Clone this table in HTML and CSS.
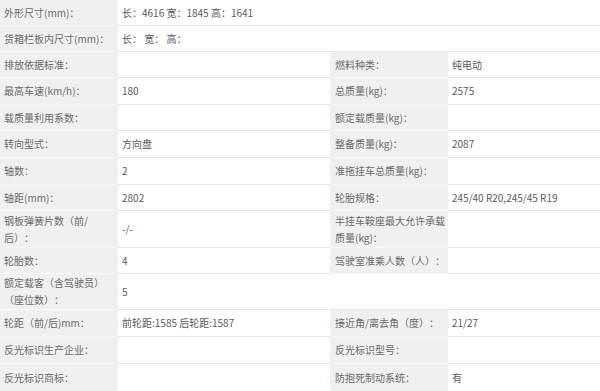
FILE: index.html
```html
<!DOCTYPE html>
<html lang="zh-CN">
<head>
<meta charset="utf-8">
<title>车辆参数</title>
<link rel="stylesheet" href="styles.css">
</head>
<body>
<table class="spec">
  <colgroup>
    <col class="c-label">
    <col class="c-value">
    <col class="c-label">
    <col class="c-value2">
  </colgroup>
  <tbody>
    <tr class="h25"><td class="lb">外形尺寸(mm)：</td><td class="val" colspan="3">长：4616 宽：1845 高：1641</td></tr>
    <tr class="h26"><td class="lb">货箱栏板内尺寸(mm)：</td><td class="val" colspan="3">长：&nbsp;宽：&nbsp;高：</td></tr>
    <tr class="h26"><td class="lb">排放依据标准：</td><td class="val"></td><td class="lb lb2">燃料种类：</td><td class="val">纯电动</td></tr>
    <tr class="h27"><td class="lb">最高车速(km/h)：</td><td class="val">180</td><td class="lb lb2">总质量(kg)：</td><td class="val">2575</td></tr>
    <tr class="h26"><td class="lb">载质量利用系数：</td><td class="val"></td><td class="lb lb2">额定载质量(kg)：</td><td class="val"></td></tr>
    <tr class="h27"><td class="lb">转向型式：</td><td class="val">方向盘</td><td class="lb lb2">整备质量(kg)：</td><td class="val">2087</td></tr>
    <tr class="h27"><td class="lb">轴数：</td><td class="val">2</td><td class="lb lb2">准拖挂车总质量(kg)：</td><td class="val"></td></tr>
    <tr class="h26"><td class="lb">轴距(mm)：</td><td class="val">2802</td><td class="lb lb2">轮胎规格：</td><td class="val">245/40 R20,245/45 R19</td></tr>
    <tr class="h37"><td class="lb">钢板弹簧片数（前/后）：</td><td class="val">-/-</td><td class="lb lb2">半挂车鞍座最大允许承载质量(kg)：</td><td class="val"></td></tr>
    <tr class="h26"><td class="lb">轮胎数：</td><td class="val">4</td><td class="lb lb2">驾驶室准乘人数（人）：</td><td class="val"></td></tr>
    <tr class="h36"><td class="lb">额定载客（含驾驶员）（座位数）：</td><td class="val" colspan="3">5</td></tr>
    <tr class="h27"><td class="lb">轮距（前/后)mm：</td><td class="val">前轮距:1585 后轮距:1587</td><td class="lb lb2">接近角/离去角（度）：</td><td class="val">21/27</td></tr>
    <tr class="h27"><td class="lb">反光标识生产企业：</td><td class="val"></td><td class="lb lb2">反光标识型号：</td><td class="val"></td></tr>
    <tr class="h28"><td class="lb">反光标识商标：</td><td class="val"></td><td class="lb lb2">防抱死制动系统：</td><td class="val">有</td></tr>
  </tbody>
</table>
</body>
</html>
```
FILE: styles.css
```css
html, body {
  margin: 0;
  padding: 0;
  background: #ffffff;
}

.spec {
  width: 600px;
  table-layout: fixed;
  border-collapse: collapse;
  font-family: "Noto Sans CJK SC", "Microsoft YaHei", sans-serif;
  font-size: 10px;
  line-height: 17px;
  text-spacing-trim: space-all;
}

.c-label { width: 118px; }
.c-value { width: 212px; }
.c-value2 { width: 152px; }

.spec td {
  padding: 0 4px 0 4px;
  vertical-align: middle;
  box-sizing: border-box;
}

.lb {
  background: #f0f0f0;
  color: #6a6a6a;
  border-bottom: 1px solid #f8f8f8;
  padding-right: 8px;
}

.spec .lb2 {
  padding-left: 5px;
  padding-right: 3px;
}

.val {
  background: #ffffff;
  color: #5a5a5a;
  border-bottom: 1px solid #e6e6e6;
}

.h25 { height: 25px; }
.h26 { height: 26px; }
.h27 { height: 27px; }
.h28 { height: 28px; }
.h36 { height: 36px; }
.h37 { height: 37px; }
```
